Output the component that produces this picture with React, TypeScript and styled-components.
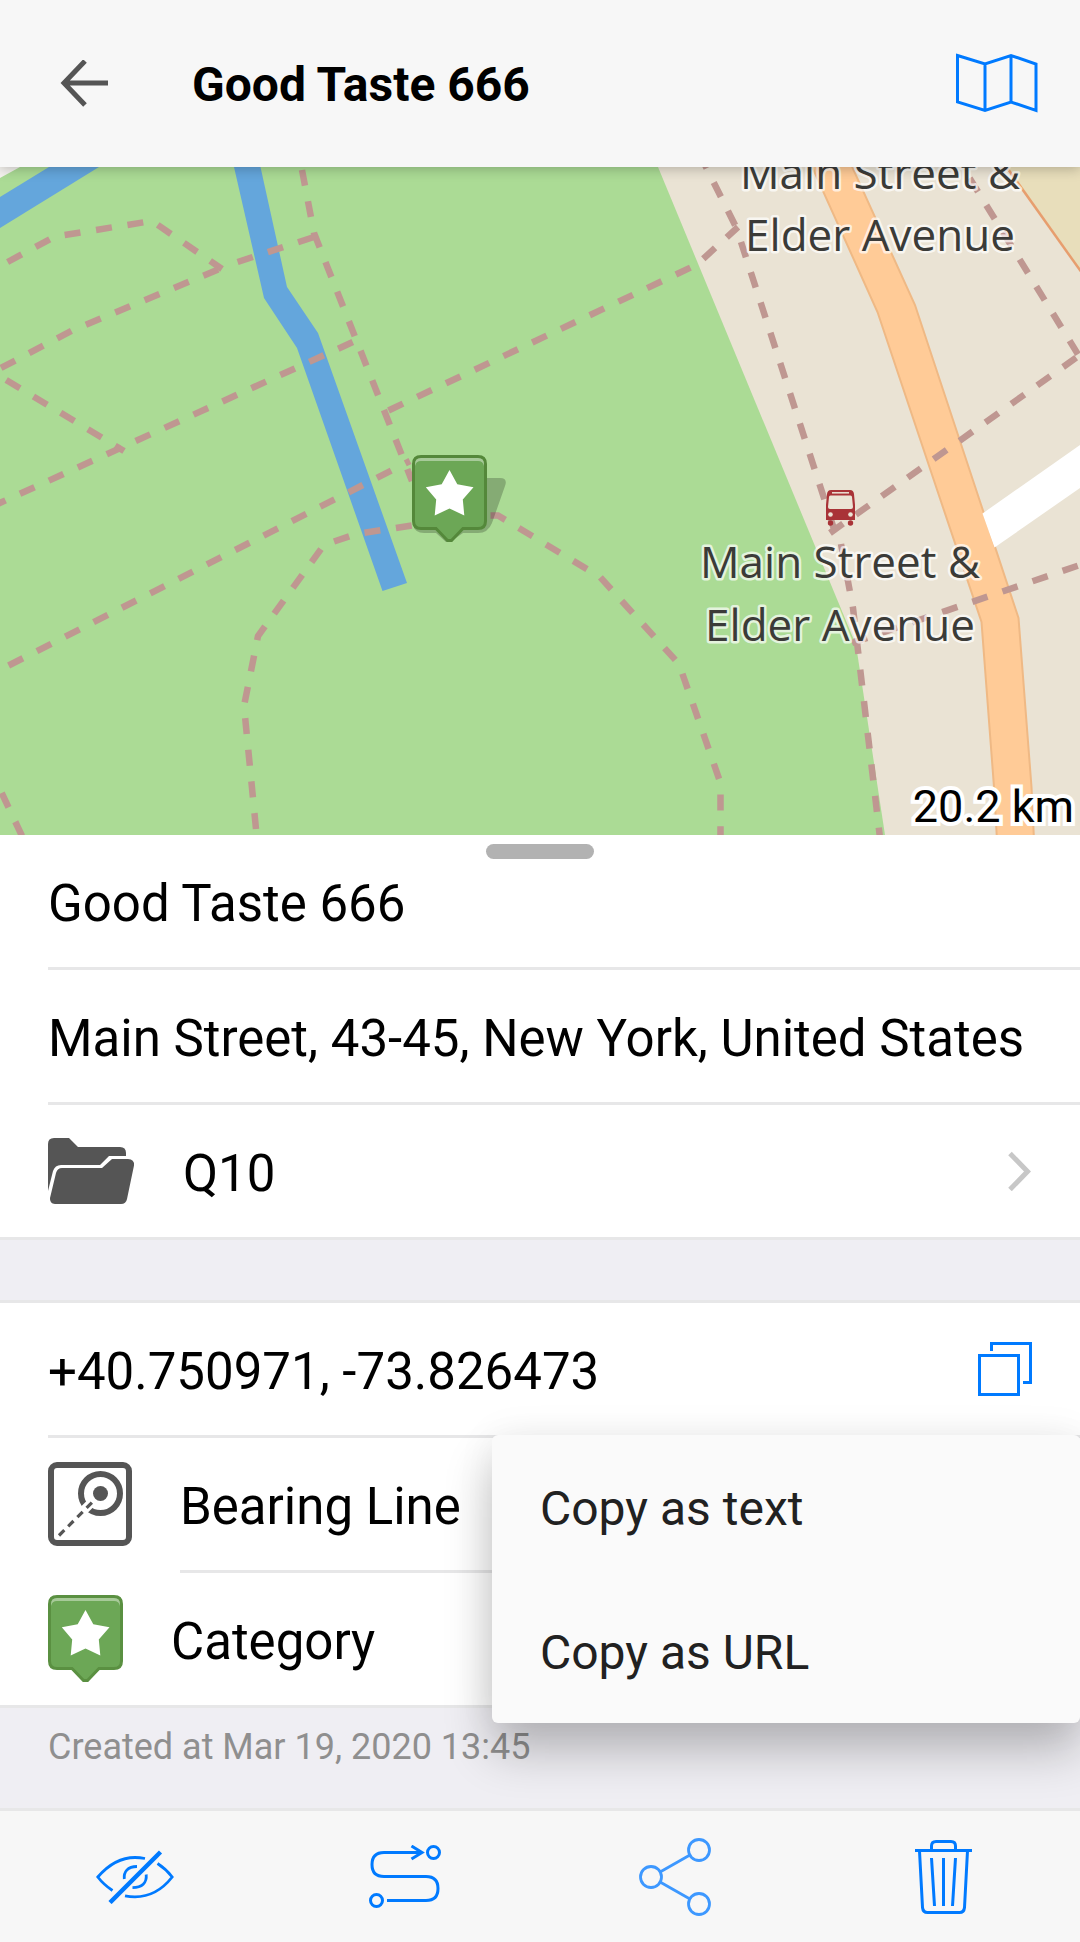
import React from "react";
import styled, { createGlobalStyle } from "styled-components";

const blue = "#007aff";
const line = "#e7e7e8";
const ink = "#555555";

const GlobalStyle = createGlobalStyle`
  *, *::before, *::after { box-sizing: border-box; }
  body {
    margin: 0;
    background: #efeef3;
    color: #000;
    font-family: Roboto, "Liberation Sans", sans-serif;
    overflow-x: hidden;
  }
  svg { display: block; flex: none; }
  h1, p { margin: 0; font-weight: 400; }
`;

const Page = styled.div`
  display: flex;
  flex-direction: column;
  min-height: 100vh;
  overflow: hidden;
`;

const PlainButton = styled.button`
  margin: 0;
  padding: 0;
  border: 0;
  background: none;
  color: inherit;
  font: inherit;
  text-align: left;
  cursor: pointer;
`;

const Header = styled.header`
  position: relative;
  z-index: 1;
  display: flex;
  align-items: center;
  gap: 84px;
  height: 167px;
  padding: 0 42px 0 60px;
  background: #f7f7f7;
  box-shadow: 0 2px 12px rgba(0, 0, 0, 0.24);
`;

const Title = styled.h1`
  flex: 1;
  padding-top: 3px;
  font-size: 48px;
  line-height: 56px;
  font-weight: 700;
`;

const MapFrame = styled.section`
  height: 668px;
  svg { width: 100%; height: 100%; }
`;

const MapLabel = styled.text`
  font-family: "Open Sans", "Noto Sans", sans-serif;
  font-size: 44px;
  fill: #3b3b38;
  stroke: rgba(255, 255, 255, 0.7);
  stroke-width: 5px;
  stroke-linejoin: round;
  paint-order: stroke;
  text-anchor: middle;
`;

const Distance = styled.text`
  font-family: Roboto, sans-serif;
  font-size: 45px;
  fill: #000;
  stroke: #fff;
  stroke-width: 8px;
  stroke-linejoin: miter;
  paint-order: stroke;
  text-anchor: end;
`;

const Sheet = styled.section`
  position: relative;
  background: #fff;
`;

const Handle = styled.div`
  position: absolute;
  top: 9px;
  left: 50%;
  width: 108px;
  height: 15px;
  margin-left: -54px;
  border-radius: 8px;
  background: #b2b2b2;
`;

const Row = styled.div<{ $inset?: boolean }>`
  position: relative;
  display: flex;
  align-items: center;
  height: 135px;
  margin-left: ${(p) => (p.$inset ? "48px" : "0")};
  padding: 0 48px 0 ${(p) => (p.$inset ? "0" : "48px")};
  border-bottom: 3px solid ${line};
`;

const IconRow = styled(PlainButton)<{ $line: "full" | "label" }>`
  display: flex;
  align-items: center;
  gap: 48px;
  width: 100%;
  height: 135px;
  padding: 0 0 ${(p) => (p.$line === "label" ? "3px" : "0")} 48px;
  border-bottom: ${(p) => (p.$line === "full" ? `3px solid ${line}` : "0")};
`;

const RowBody = styled.span<{ $line?: boolean }>`
  display: flex;
  flex: 1;
  align-items: center;
  justify-content: space-between;
  height: ${(p) => (p.$line ? "135px" : "132px")};
  margin-bottom: ${(p) => (p.$line ? "-3px" : "0")};
  padding-right: 48px;
  border-bottom: ${(p) => (p.$line ? `3px solid ${line}` : "0")};
`;

const Label = styled.span`
  flex: 1;
  padding-top: 5px;
  font-size: 51px;
  line-height: 60px;
  white-space: nowrap;
`;

const Gap = styled.div`
  height: 63px;
  border-bottom: 3px solid ${line};
  background: #efeef3;
`;

const Menu = styled.div`
  position: absolute;
  z-index: 2;
  top: 100%;
  right: 0;
  display: flex;
  flex-direction: column;
  width: 588px;
  border-radius: 6px;
  background: #fafafa;
  box-shadow: 0 28px 48px rgba(0, 0, 0, 0.24), 0 0 40px rgba(0, 0, 0, 0.06);
`;

const MenuItem = styled(PlainButton)`
  height: 144px;
  padding: 3px 48px 0;
  color: #212121;
  font-size: 48px;
  line-height: 56px;
`;

const Note = styled.p`
  flex: 1;
  min-height: 100px;
  padding: 18px 48px;
  color: #8f8f8f;
  font-size: 36px;
  line-height: 42px;
`;

const Toolbar = styled.nav`
  display: grid;
  grid-template-columns: repeat(4, 1fr);
  height: 134px;
  border-top: 3px solid ${line};
  background: #f7f7f7;
`;

const Tool = styled(PlainButton)`
  display: flex;
  align-items: center;
  justify-content: center;
`;

const BackIcon = () => (
  <svg width="48" height="48" fill="none" stroke={ink} strokeWidth="5">
    <path d="M48 23H5M25 1L4 23L25 45" />
  </svg>
);

const MapIcon = () => (
  <svg width="84" height="62" fill="none" stroke={blue} strokeWidth="3">
    <path d="M3.500 2.500L31 11L57 2.500L82 11V57.500L57 49L31 57.500L3.500 49ZM31 11V57.500M57 2.500V49" />
  </svg>
);

const FolderIcon = () => (
  <svg width="87" height="66" fill={ink}>
    <path d="M0 6Q0 0 6 0H21L30 9H72Q78 9 78 15V18H61L52 27H13Q7 27 5 33L0 53Z" />
    <path d="M14 30H54L64 21H80Q86.500 21 86 27.500L79 61Q78 66 73 66H7Q1.500 65.500 2 60L8 35Q9.500 30 14 30Z" />
  </svg>
);

const ChevronIcon = () => (
  <svg width="24" height="40" fill="none" stroke="#c7c7c7" strokeWidth="5">
    <path d="M2 2.500L19.500 20.500L2 38.500" />
  </svg>
);

const CopyIcon = () => (
  <svg width="54" height="54" fill="none" stroke={blue} strokeWidth="3">
    <path d="M1.500 13.500H40.500V52.500H1.500ZM13.500 9V1.500H52.500V40.500H45" />
  </svg>
);

const BearingIcon = () => (
  <svg width="84" height="84" fill="none">
    <rect x="3" y="3" width="78" height="78" rx="6" stroke={ink} strokeWidth="6" />
    <circle cx="52.500" cy="31.500" r="19.500" stroke={ink} strokeWidth="6" />
    <path d="M32 52L46 38" stroke="#fff" strokeWidth="9" />
    <circle cx="52.500" cy="31.500" r="7.500" fill={ink} />
    <path d="M11 73.500L44 40.500" stroke={ink} strokeWidth="3.200" strokeDasharray="7.500 5.500" />
  </svg>
);

const PinShape = ({ edge = "#5a9041" }: { edge?: string }) => (
  <g>
    <path
      d="M9 1.500H66Q73.500 1.500 73.500 9V66Q73.500 73.500 66 73.500H51L39.500 85.500H35.500L24 73.500H9Q1.500 73.500 1.500 66V9Q1.500 1.500 9 1.500Z"
      fill="#6ca756"
      stroke={edge}
      strokeWidth="3"
    />
    <path d="M3 11V9Q3 3 9 3H66Q72 3 72 9V11Q71 6 66 6H9Q4 6 3 11Z" fill="#a7ca99" />
    <path d="M37.500 15L45.300 29.300L61.500 32.300L50.800 44.500L52.300 60.500L37.500 53.500L22.700 60.500L24.200 44.500L13.800 32.300L29.700 29.300Z" fill="#fff" />
  </g>
);

const PinIcon = () => (
  <svg width="75" height="88">
    <PinShape />
  </svg>
);

const HideIcon = () => (
  <svg width="78" height="54" fill="none" stroke={blue} strokeWidth="2.800">
    <path d="M16.500 40.500C10.500 36.500 6 32.500 1.800 27C14 13 26 7.500 39 7.500Q44 7.500 49 8.500M61.500 13.500C67 17 72 21.500 76.200 27C66 40 54 46.800 39 46.800Q34 46.800 29 45.800" />
    <path d="M28.300 29C27.500 22 31.500 16.500 41 16.500M50.200 24.500C51 33 46 37.500 36.500 37.700" />
    <path d="M14 52.500L64.500 2" strokeWidth="4.500" />
  </svg>
);

const RouteIcon = () => (
  <svg width="72" height="63" fill="none" stroke={blue} strokeWidth="3">
    <circle cx="7.500" cy="55.500" r="6" />
    <circle cx="64.500" cy="7.500" r="6" />
    <path d="M18 55.500H57Q69 55.500 69 43.500Q69 31.500 57 31.500H15Q3 31.500 3 19.500Q3 7.500 15 7.500H52M42.500 1L53 7.500L42.500 14" />
  </svg>
);

const ShareIcon = () => (
  <svg width="72" height="78" fill="none" stroke="#3d98ff" strokeWidth="2.800">
    <circle cx="12" cy="39" r="10.500" />
    <circle cx="60" cy="12" r="10.500" />
    <circle cx="60" cy="66" r="10.500" />
    <path d="M21.500 33.700L50.500 17.300M21.500 44.300L50.500 60.700" />
  </svg>
);

const TrashIcon = () => (
  <svg width="60" height="74" fill="none" stroke={blue} strokeWidth="3">
    <path d="M0 10.500H57M16.500 10V6Q16.500 1.500 21 1.500H36Q40.500 1.500 40.500 6V10" />
    <path d="M4.500 11L7.500 67.500Q8 72.500 12.500 72.500H44.500Q49 72.500 49.500 67.500L52.500 11" />
    <path d="M16.500 18L19.500 66M28.500 18V66M40.500 18L37.500 66" />
  </svg>
);

const footpaths = [
  "M7.600 262L55 236.500L152 221L222 269",
  "M1 368L73 330L222 268",
  "M237.600 262L314 237",
  "M6.200 380L124 451",
  "M-9 507L354 341.500",
  "M8.600 665.500L410 461",
  "M302 170L314 233L412 481",
  "M388.500 410.500L697 264.500L738 227",
  "M699.500 154L738 231",
  "M741 242L835 532",
  "M830 533L1080 355",
  "M953 151L1079 356",
  "M852 643L1080 565",
  "M841 544L853 608L880 838",
  "M256 829L244 706L258 636L324 545L356 534L412 525.500",
  "M490.500 515.500L498 515.500L600 577L679 664L720.500 783V836",
  "M1.700 793L22 836",
];

const StreetMap = () => (
  <svg viewBox="0 167 1080 668" preserveAspectRatio="xMidYMid slice" role="img" aria-label="Map">
    <rect x="0" y="167" width="1080" height="668" fill="#eae3d4" />
    <path d="M1005 167L1080 270V167Z" fill="#e8debb" />
    <path d="M1003 162L1082 273" stroke="#e79e6e" strokeWidth="2.500" />
    <path d="M0 167H658L856 645L885 835H0Z" fill="#abdb95" />
    <path d="M0 167H20L0 178Z" fill="#f4f2ee" />
    <path d="M0 197L49 167H99L0 228Z" fill="#64a6dc" />
    <path d="M234 167L264 298L297 348L382.500 591L407 583L318 333L287 287L260.500 167Z" fill="#64a6dc" />
    <path
      d="M809 160L877.500 312L940.500 500L981.500 622L994 787L997 840H1034L1031.500 787L1018.500 618L979.500 500L915 305L849 160Z"
      fill="#ffcb97"
      stroke="#efb985"
      strokeWidth="2"
    />
    <path d="M982.500 513.500L1080 445V488L994.500 547.500Z" fill="#fff" />
    <g fill="none" stroke="#bf9791" strokeWidth="6.500" strokeDasharray="16 15.800">
      {footpaths.map((d) => (
        <path key={d} d={d} />
      ))}
    </g>
    <g fill="#a93337">
      <path d="M831 490H850Q853.500 490 854 494L855 505V520H826V505L827 494Q827.500 490 831 490Z" />
      <circle cx="830.500" cy="523" r="2.700" />
      <circle cx="850.500" cy="523" r="2.700" />
      <path d="M830.500 495.500H850.500Q852 495.500 852 497L853 507Q853 509 851 509H830Q828 509 828 507L829 497Q829 495.500 830.500 495.500Z" fill="#ebe4d5" />
      <path d="M832 492.800H849" stroke="#ebe4d5" strokeWidth="1.500" />
      <circle cx="830.500" cy="514.500" r="2.300" fill="#ebe4d5" />
      <circle cx="850.500" cy="514.500" r="2.300" fill="#ebe4d5" />
    </g>
    <MapLabel x="880" y="189">Main Street &amp;</MapLabel>
    <MapLabel x="880" y="251">Elder Avenue</MapLabel>
    <MapLabel x="840" y="578">Main Street &amp;</MapLabel>
    <MapLabel x="840" y="641">Elder Avenue</MapLabel>
    <path
      d="M430 478H500Q508 478 505 486L492 523Q488 533 478 533H463L450 542H446L436 533H424Q415 533 413 525Z"
      fill="#000"
      fillOpacity="0.22"
    />
    <g transform="translate(412 455)">
      <PinShape edge="#54883a" />
    </g>
    <Distance x="1074" y="822">20.2 km</Distance>
  </svg>
);

export default function App() {
  return (
    <Page>
      <GlobalStyle />
      <Header>
        <PlainButton aria-label="Back"><BackIcon /></PlainButton>
        <Title>Good Taste 666</Title>
        <PlainButton aria-label="Show on map"><MapIcon /></PlainButton>
      </Header>
      <MapFrame><StreetMap /></MapFrame>
      <Sheet>
        <Handle />
        <Row $inset><Label>Good Taste 666</Label></Row>
        <Row $inset><Label>Main Street, 43-45, New York, United States</Label></Row>
        <IconRow $line="full">
          <FolderIcon />
          <RowBody><Label>Q10</Label><ChevronIcon /></RowBody>
        </IconRow>
      </Sheet>
      <Gap />
      <Sheet>
        <Row $inset>
          <Label>+40.750971, -73.826473</Label>
          <PlainButton aria-label="Copy coordinates"><CopyIcon /></PlainButton>
          <Menu role="menu">
            <MenuItem role="menuitem">Copy as text</MenuItem>
            <MenuItem role="menuitem">Copy as URL</MenuItem>
          </Menu>
        </Row>
        <IconRow $line="label">
          <BearingIcon />
          <RowBody $line><Label>Bearing Line</Label></RowBody>
        </IconRow>
        <IconRow $line="full">
          <PinIcon />
          <RowBody><Label>Category</Label></RowBody>
        </IconRow>
      </Sheet>
      <Note>Created at Mar 19, 2020 13:45</Note>
      <Toolbar>
        <Tool aria-label="Hide"><HideIcon /></Tool>
        <Tool aria-label="Route"><RouteIcon /></Tool>
        <Tool aria-label="Share"><ShareIcon /></Tool>
        <Tool aria-label="Delete"><TrashIcon /></Tool>
      </Toolbar>
    </Page>
  );
}
